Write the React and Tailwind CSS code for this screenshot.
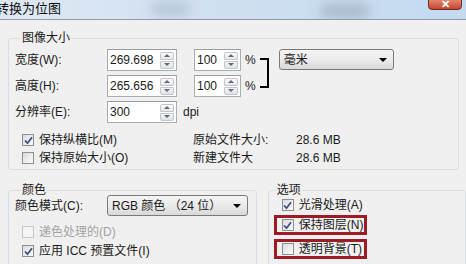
import React from "react";

const CJK = "font-['Liberation_Sans','Noto_Sans_CJK_SC',sans-serif]";

function Spin() {
  return (
    <div className="flex flex-col w-[14px] h-[17px] mr-[2px] gap-px">
      <div className="flex-1 flex items-center justify-center rounded-t-[2px] border border-[#c3c7cc] bg-linear-to-b from-[#fbfbfb] to-[#e6e8ea]">
        <div className="w-0 h-0 border-x-[3px] border-x-transparent border-b-[3px] border-b-[#5d6b7a]" />
      </div>
      <div className="flex-1 flex items-center justify-center rounded-b-[2px] border border-[#c3c7cc] bg-linear-to-b from-[#f3f4f5] to-[#e0e2e4]">
        <div className="w-0 h-0 border-x-[3px] border-x-transparent border-t-[3px] border-t-[#5d6b7a]" />
      </div>
    </div>
  );
}

function NumInput({ value, w }) {
  return (
    <div className={`flex items-center h-[22px] border border-[#abadb3] border-t-[#9a9da3] bg-white ${w}`}>
      <span className="flex-1 pl-[2px] text-[12px] text-[#1a1a1a]">{value}</span>
      <Spin />
    </div>
  );
}

function Check({ checked, disabled }) {
  return (
    <div
      className={`w-[12px] h-[12px] border flex items-center justify-center ${
        disabled ? "border-[#c8c8c8] bg-[#f4f4f4]" : "border-[#8e8f8f] bg-linear-to-br from-[#dcdcdc] to-[#fbfbfb]"
      }`}
    >
      {checked && (
        <svg width="9" height="9" viewBox="0 0 9 9">
          <path d="M1 4.5 L3.5 7.2 L8 1.2" fill="none" stroke="#3c4f86" strokeWidth="1.8" />
        </svg>
      )}
    </div>
  );
}

function CheckRow({ label, checked, disabled, className = "" }) {
  return (
    <div className={`flex items-center gap-[5px] ${className}`}>
      <Check checked={checked} disabled={disabled} />
      <span className={`text-[12px] leading-none ${disabled ? "text-[#a3a3a3]" : "text-[#1a1a1a]"}`}>{label}</span>
    </div>
  );
}

function Select({ value, w }) {
  return (
    <div
      className={`flex items-center h-[21px] px-[4px] rounded-[3px] border border-[#7a7a7a] bg-linear-to-b from-[#f4f4f4] via-[#ebebeb] to-[#d9d9d9] ${w}`}
    >
      <span className="flex-1 text-[12px] text-[#1a1a1a] leading-none">{value}</span>
      <div className="w-0 h-0 mr-[2px] border-x-[4px] border-x-transparent border-t-[4px] border-t-black" />
    </div>
  );
}

function Group({ title, className = "", legendClass = "ml-[6px]", children }) {
  return (
    <fieldset className={`border border-[#d5dfe5] rounded-[3px] ${className}`}>
      <legend className={`px-px text-[12px] leading-[14px] text-[#1a1a1a] ${legendClass}`}>{title}</legend>
      {children}
    </fieldset>
  );
}

export default function App() {
  return (
    <div className={`w-[466px] h-[264px] overflow-hidden bg-[#f0f0f0] ${CJK}`}>
      {/* title bar */}
      <div className="relative h-[20px] border-b border-[#8d9cab] bg-linear-to-r from-[#dfe9f4] via-[#cfdff0] to-[#c4daf1] overflow-hidden">
        <span className="absolute left-[-4px] top-[1px] text-[13px] leading-[16px] text-[#111]">转换为位图</span>
        <div className="absolute left-[150px] top-[2px] w-[40px] h-[14px] rounded-full bg-[#b7c7d8] blur-[6px]" />
        <div className="absolute left-[320px] top-[4px] w-[50px] h-[14px] rounded-full bg-[#aab9cb] blur-[6px]" />
        <div className="absolute left-[428px] top-[-4px] w-[34px] h-[14px] rounded-[4px] border border-[#6f2a22] bg-linear-to-b from-[#e89b87] to-[#c7432d] flex items-end justify-center">
          <span className="text-white text-[11px] font-bold leading-[10px]">✕</span>
        </div>
      </div>

      <div className="pt-[11px] pl-[8px]">
        <Group title="图像大小" className="w-[451px] h-[139px] pl-[6px]">
          <div className="flex mt-[4px]">
            <div className="flex flex-col gap-[4px]">
              {[
                ["宽度(W):", "269.698"],
                ["高度(H):", "265.656"],
              ].map(([label, v]) => (
                <div key={label} className="flex items-center">
                  <span className="w-[92px] text-[12px] text-[#1a1a1a]">{label}</span>
                  <NumInput value={v} w="w-[70px]" />
                  <div className="ml-[17px]">
                    <NumInput value="100" w="w-[47px]" />
                  </div>
                  <span className="ml-[4px] text-[12px] text-[#1a1a1a]">%</span>
                </div>
              ))}
            </div>
            <div className="self-center ml-[4px] w-[9px] h-[30px] border-y-2 border-r-2 border-black" />
            <div className="ml-[10px]">
              <Select value="毫米" w="w-[115px]" />
            </div>
          </div>
          <div className="flex items-center mt-[4px]">
            <span className="w-[92px] text-[12px] text-[#1a1a1a]">分辨率(E):</span>
            <NumInput value="300" w="w-[70px]" />
            <span className="ml-[6px] text-[12px] text-[#1a1a1a]">dpi</span>
          </div>
          <div className="flex mt-[11px]">
            <div className="flex flex-col gap-[6px] w-[178px] pl-[7px]">
              <CheckRow label="保持纵横比(M)" checked />
              <CheckRow label="保持原始大小(O)" />
            </div>
            <div className="flex flex-col gap-[6px] text-[12px] leading-none text-[#1a1a1a]">
              <div className="flex">
                <span className="w-[103px]">原始文件大小:</span>
                <span>28.6 MB</span>
              </div>
              <div className="flex">
                <span className="w-[103px]">新建文件大</span>
                <span>28.6 MB</span>
              </div>
            </div>
          </div>
        </Group>

        <div className="flex mt-[13px] gap-[11px]">
          <Group title="颜色" className="w-[251px] h-[90px] pl-[6px]">
            <div className="flex items-center -mt-[2px]">
              <span className="w-[92px] text-[12px] text-[#1a1a1a]">颜色模式(C):</span>
              <Select value="RGB 颜色 （24 位）" w="w-[141px]" />
            </div>
            <CheckRow label="递色处理的(D)" disabled className="mt-[10px] pl-[7px]" />
            <CheckRow label="应用 ICC 预置文件(I)" checked className="mt-[7px] pl-[7px]" />
          </Group>

          <Group title="选项" className="w-[200px] h-[90px] pl-[5px]" legendClass="ml-[2px]">
            <div className="flex flex-col w-[93px] -mt-[2px]">
              <CheckRow label="光滑处理(A)" checked className="h-[20px] pl-[5px] border-[3px] border-transparent" />
              <CheckRow label="保持图层(N)" checked className="h-[20px] pl-[5px] border-[3px] border-[#9e1a25]" />
              <CheckRow label="透明背景(T)" className="mt-[4px] h-[20px] pl-[5px] border-[3px] border-[#9e1a25]" />
            </div>
          </Group>
        </div>
      </div>
    </div>
  );
}
